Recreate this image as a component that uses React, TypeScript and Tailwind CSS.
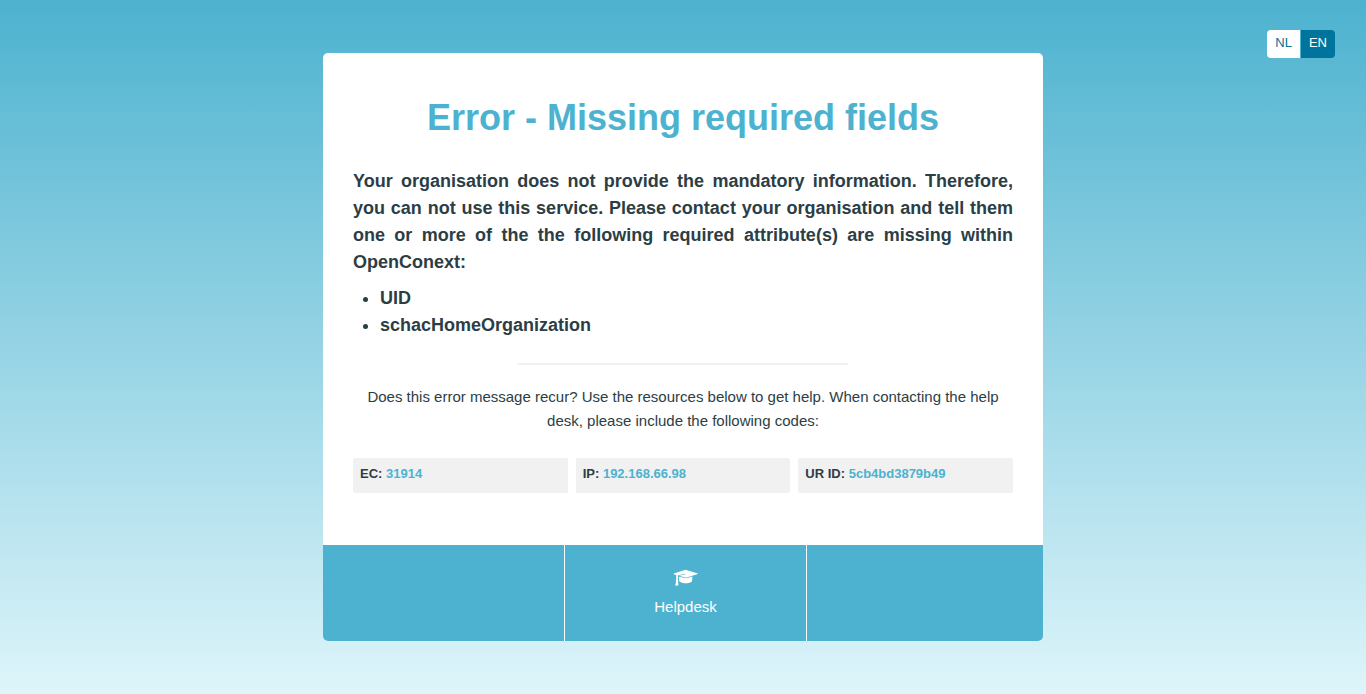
import React from 'react';

const attributes = ['UID', 'schacHomeOrganization'];
const codes = [
  { label: 'EC:', value: '31914' },
  { label: 'IP:', value: '192.168.66.98' },
  { label: 'UR ID:', value: '5cb4bd3879b49' },
];

function GraduationCap() {
  return (
    <svg viewBox="0 0 26 18" className="h-[18px] w-[26px]" fill="currentColor" aria-hidden="true">
      <path d="M12.5.8 24.8 4.4v.7L13 8.7 6 6.7l6.6-1.5-.1-.4-8.2 1.6L.7 5.2v-.7L12.5.8Z" />
      <path d="M6 7.7c2.4.1 4.6 1.5 7 1.5s4.2-1.4 6.2-1.7l.2.5-.3 4.3c-1.6 1.5-3.6 2-6.2 2s-5-.5-6.6-2L5.8 8.2 6 7.7Z" />
      <path d="m3.2 5.9 1.8.3-.1 4.9c.6.4.7 1 .2 1.5l.3 4H2.2l.9-4c-.5-.5-.5-1.1.1-1.5V5.9Z" />
    </svg>
  );
}

export default function App() {
  return (
    <div className="flex min-h-screen flex-col bg-linear-to-b/srgb from-[#4db2cf] to-[#def5fa] font-['Helvetica','Liberation_Sans',sans-serif] text-[#2c3e45]">
      <nav aria-label="Language" className="flex h-[53px] justify-end pt-[30px] pr-[31px]">
        <div className="flex h-7 overflow-hidden rounded text-[13px] leading-[26px]">
          <a href="#nl" className="bg-white px-2 text-[#00749c]">NL</a>
          <a href="#en" className="border-l border-[#4db2cf] bg-[#00749c] px-2 text-white">EN</a>
        </div>
      </nav>
      <main className="mx-auto mb-[53px] w-full max-w-[720px] overflow-hidden rounded-[5px] bg-white">
        <div className="px-[30px] pt-[38px] pb-[52px]">
          <h1 className="text-center text-[36px] leading-[54px] font-bold text-[#4db2cf]">Error - Missing required fields</h1>
          <p className="mt-[23px] text-justify text-[18px] leading-[27px] font-bold">
            Your organisation does not provide the mandatory information. Therefore, you can not use this service. Please contact your organisation and tell them one or more of the the following required attribute(s) are missing within OpenConext:
          </p>
          <ul className="mt-[9px] list-disc pl-[27px] text-[18px] leading-[27px] font-bold">
            {attributes.map((name) => <li key={name}>{name}</li>)}
          </ul>
          <hr className="mx-auto mt-6 w-1/2 border-t-2 border-[#f1f1f1]" />
          <p className="mt-5 text-center text-[15px] leading-6">
            Does this error message recur? Use the resources below to get help. When contacting the help desk, please include the following codes:
          </p>
          <ul className="mt-[25px] grid grid-cols-3 gap-2 text-[13px] leading-5 font-bold">
            {codes.map((code) => (
              <li key={code.label} className="h-[35px] rounded-xs bg-[#f1f1f1] px-[7px] pt-[6px]">
                {code.label} <span className="text-[#4db2cf]">{code.value}</span>
              </li>
            ))}
          </ul>
        </div>
        <footer className="grid h-24 grid-cols-[241px_243px_1fr] bg-[#4db2cf] text-white">
          <div />
          <a href="#helpdesk" className="flex flex-col items-center gap-2 border-x border-white pt-6 text-[15px] leading-6">
            <GraduationCap />
            Helpdesk
          </a>
          <div />
        </footer>
      </main>
    </div>
  );
}
